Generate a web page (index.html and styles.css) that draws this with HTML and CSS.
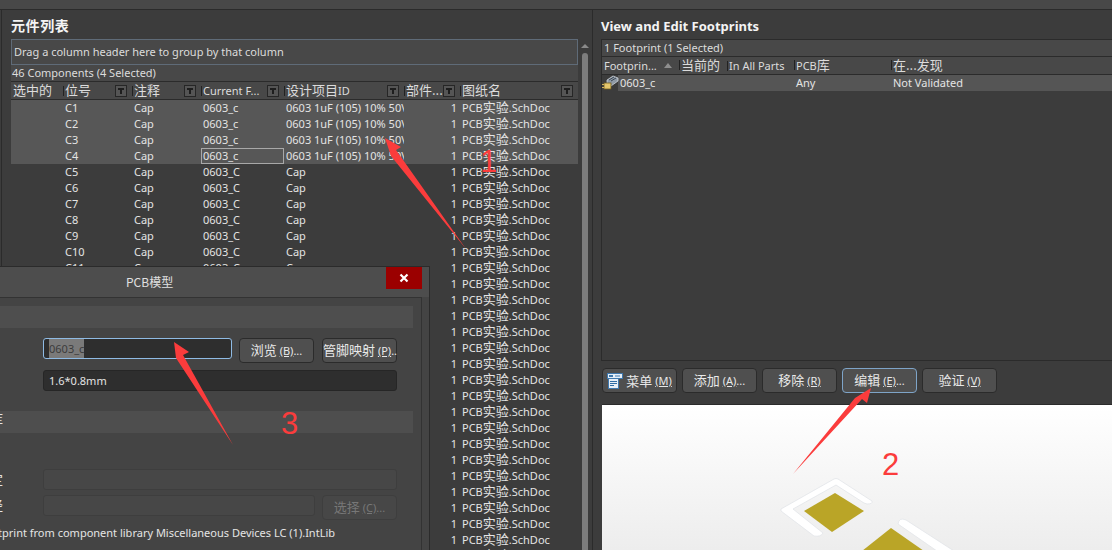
FILE: index.html
```html
<!DOCTYPE html>
<html lang="zh-CN">
<head>
    <meta charset="UTF-8">
    <title>PCB模型</title>
    <link rel="stylesheet" href="styles.css">
</head>
<body>
    <div class="top-strip"></div>

    <div class="workspace">
        <div class="left-panel">
            <h2 class="panel-title title-zh">元件列表</h2>
            <div class="panel-body">
                <div class="grid-area">
                    <div class="group-box">Drag a column header here to group by that column</div>
                    <div class="count-row">46 Components (4 Selected)</div>
                    <table class="comp-table">
                        <colgroup>
                            <col class="c-sel"><col class="c-ref"><col class="c-com"><col class="c-foot"><col class="c-id"><col class="c-part"><col class="c-sheet">
                        </colgroup>
                        <thead>
                            <tr>
                                <th class="cjk">选中的</th>
                                <th class="cjk">位号<i class="filter"></i></th>
                                <th class="cjk">注释<i class="filter"></i></th>
                                <th>Current F...<i class="filter"></i></th>
                                <th class="cjk">设计项目<span class="latin">ID</span><i class="filter"></i></th>
                                <th class="cjk">部件...<i class="filter"></i></th>
                                <th class="cjk">图纸名<i class="filter"></i></th>
                            </tr>
                        </thead>
                        <tbody>
                            <tr class="sel"><td></td><td>C1</td><td>Cap</td><td>0603_c</td><td>0603 1uF (105) 10% 50V</td><td class="num">1</td><td>PCB<span class="cjk">实验</span>.SchDoc</td></tr>
                            <tr class="sel"><td></td><td>C2</td><td>Cap</td><td>0603_c</td><td>0603 1uF (105) 10% 50V</td><td class="num">1</td><td>PCB<span class="cjk">实验</span>.SchDoc</td></tr>
                            <tr class="sel"><td></td><td>C3</td><td>Cap</td><td>0603_c</td><td>0603 1uF (105) 10% 50V</td><td class="num">1</td><td>PCB<span class="cjk">实验</span>.SchDoc</td></tr>
                            <tr class="sel"><td></td><td>C4</td><td>Cap</td><td class="focus">0603_c</td><td>0603 1uF (105) 10% 50V</td><td class="num">1</td><td>PCB<span class="cjk">实验</span>.SchDoc</td></tr>
                            <tr><td></td><td>C5</td><td>Cap</td><td>0603_C</td><td>Cap</td><td class="num">1</td><td>PCB<span class="cjk">实验</span>.SchDoc</td></tr>
                            <tr><td></td><td>C6</td><td>Cap</td><td>0603_C</td><td>Cap</td><td class="num">1</td><td>PCB<span class="cjk">实验</span>.SchDoc</td></tr>
                            <tr><td></td><td>C7</td><td>Cap</td><td>0603_C</td><td>Cap</td><td class="num">1</td><td>PCB<span class="cjk">实验</span>.SchDoc</td></tr>
                            <tr><td></td><td>C8</td><td>Cap</td><td>0603_C</td><td>Cap</td><td class="num">1</td><td>PCB<span class="cjk">实验</span>.SchDoc</td></tr>
                            <tr><td></td><td>C9</td><td>Cap</td><td>0603_C</td><td>Cap</td><td class="num">1</td><td>PCB<span class="cjk">实验</span>.SchDoc</td></tr>
                            <tr><td></td><td>C10</td><td>Cap</td><td>0603_C</td><td>Cap</td><td class="num">1</td><td>PCB<span class="cjk">实验</span>.SchDoc</td></tr>
                            <tr><td></td><td>C11</td><td>Cap</td><td>0603_C</td><td>Cap</td><td class="num">1</td><td>PCB<span class="cjk">实验</span>.SchDoc</td></tr>
                            <tr><td></td><td>C12</td><td>Cap</td><td>0603_C</td><td>Cap</td><td class="num">1</td><td>PCB<span class="cjk">实验</span>.SchDoc</td></tr>
                            <tr><td></td><td>C13</td><td>Cap</td><td>0603_C</td><td>Cap</td><td class="num">1</td><td>PCB<span class="cjk">实验</span>.SchDoc</td></tr>
                            <tr><td></td><td>C14</td><td>Cap</td><td>0603_C</td><td>Cap</td><td class="num">1</td><td>PCB<span class="cjk">实验</span>.SchDoc</td></tr>
                            <tr><td></td><td>C15</td><td>Cap</td><td>0603_C</td><td>Cap</td><td class="num">1</td><td>PCB<span class="cjk">实验</span>.SchDoc</td></tr>
                            <tr><td></td><td>C16</td><td>Cap</td><td>0603_C</td><td>Cap</td><td class="num">1</td><td>PCB<span class="cjk">实验</span>.SchDoc</td></tr>
                            <tr><td></td><td>C17</td><td>Cap</td><td>0603_C</td><td>Cap</td><td class="num">1</td><td>PCB<span class="cjk">实验</span>.SchDoc</td></tr>
                            <tr><td></td><td>C18</td><td>Cap</td><td>0603_C</td><td>Cap</td><td class="num">1</td><td>PCB<span class="cjk">实验</span>.SchDoc</td></tr>
                            <tr><td></td><td>C19</td><td>Cap</td><td>0603_C</td><td>Cap</td><td class="num">1</td><td>PCB<span class="cjk">实验</span>.SchDoc</td></tr>
                            <tr><td></td><td>C20</td><td>Cap</td><td>0603_C</td><td>Cap</td><td class="num">1</td><td>PCB<span class="cjk">实验</span>.SchDoc</td></tr>
                            <tr><td></td><td>C21</td><td>Cap</td><td>0603_C</td><td>Cap</td><td class="num">1</td><td>PCB<span class="cjk">实验</span>.SchDoc</td></tr>
                            <tr><td></td><td>C22</td><td>Cap</td><td>0603_C</td><td>Cap</td><td class="num">1</td><td>PCB<span class="cjk">实验</span>.SchDoc</td></tr>
                            <tr><td></td><td>C23</td><td>Cap</td><td>0603_C</td><td>Cap</td><td class="num">1</td><td>PCB<span class="cjk">实验</span>.SchDoc</td></tr>
                            <tr><td></td><td>C24</td><td>Cap</td><td>0603_C</td><td>Cap</td><td class="num">1</td><td>PCB<span class="cjk">实验</span>.SchDoc</td></tr>
                            <tr><td></td><td>C25</td><td>Cap</td><td>0603_C</td><td>Cap</td><td class="num">1</td><td>PCB<span class="cjk">实验</span>.SchDoc</td></tr>
                            <tr><td></td><td>C26</td><td>Cap</td><td>0603_C</td><td>Cap</td><td class="num">1</td><td>PCB<span class="cjk">实验</span>.SchDoc</td></tr>
                            <tr><td></td><td>C27</td><td>Cap</td><td>0603_C</td><td>Cap</td><td class="num">1</td><td>PCB<span class="cjk">实验</span>.SchDoc</td></tr>
                            <tr><td></td><td>C28</td><td>Cap</td><td>0603_C</td><td>Cap</td><td class="num">1</td><td>PCB<span class="cjk">实验</span>.SchDoc</td></tr>
                            <tr><td></td><td>C29</td><td>Cap</td><td>0603_C</td><td>Cap</td><td class="num">1</td><td>PCB<span class="cjk">实验</span>.SchDoc</td></tr>
                        </tbody>
                    </table>
                </div>
                <div class="scrollbar">
                    <span class="scroll-up"></span>
                    <span class="scroll-thumb"></span>
                </div>
            </div>
        </div>

        <div class="right-panel">
            <h2 class="panel-title">View and Edit Footprints</h2>
            <div class="fp-grid">
                <div class="fp-count">1 Footprint (1 Selected)</div>
                <div class="fp-head">
                    <span class="fp-c1">Footprin...<i class="sort-up"></i></span>
                    <span class="fp-c2 cjk">当前的</span>
                    <span class="fp-c3">In All Parts</span>
                    <span class="fp-c4">PCB<b class="cjk">库</b></span>
                    <span class="fp-c5 cjk">在...发现</span>
                </div>
                <div class="fp-row">
                    <span class="fp-icon">
                        <svg width="17" height="16" viewBox="0 0 17 16">
                            <path d="M5 5 L11 1 L16 3 L16 6 L9 11 L5 9 Z" fill="#8f9aa6" stroke="#d8dee4" stroke-width="0.7"/>
                            <path d="M7 5 L12 2 M9 6 L14 3" stroke="#3b4652" stroke-width="1"/>
                            <rect x="2" y="8" width="7" height="6" fill="#e4c66c" stroke="#6e5a20" stroke-width="0.8"/>
                            <rect x="0" y="9" width="2" height="1" fill="#d3b35a"/>
                            <rect x="0" y="12" width="2" height="1" fill="#d3b35a"/>
                        </svg>
                    </span>
                    <span class="fp-name">0603_c</span>
                    <span class="fp-c2"></span>
                    <span class="fp-c3"></span>
                    <span class="fp-c4">Any</span>
                    <span class="fp-c5">Not Validated</span>
                </div>
            </div>
            <div class="btn-row">
                <button class="btn btn-menu">
                    <svg width="16" height="16" viewBox="0 0 16 16">
                        <rect x="0.5" y="0.5" width="15" height="5" fill="#e6eff8" stroke="#3f78ad"/>
                        <rect x="2" y="2" width="4" height="2" fill="#3f78ad"/>
                        <rect x="8" y="2.5" width="5" height="1" fill="#3f78ad"/>
                        <rect x="1.5" y="5.5" width="10" height="10" fill="#e6eff8" stroke="#3f78ad"/>
                        <path d="M3 8.5h7M3 10.5h7M3 12.5h4" stroke="#2f6da6"/>
                    </svg>
                    <span class="cjk">菜单</span> <u>(M)</u>
                </button>
                <button class="btn"><span class="cjk">添加</span> <u>(A)</u>...</button>
                <button class="btn"><span class="cjk">移除</span> <u>(R)</u></button>
                <button class="btn btn-active"><span class="cjk">编辑</span> <u>(E)</u>...</button>
                <button class="btn"><span class="cjk">验证</span> <u>(V)</u></button>
            </div>
            <div class="preview">
                <svg class="preview-art" width="510" height="146" viewBox="0 0 510 146">
                    <path d="M179 104 L232 74 Q234 73 236 74 L270 96 Q271 99 265 99 L262 98 L234 80 L191 104 L221 128 Q219 132 212 131 L179 106 Z" fill="#fff" stroke="#dfe2e6" stroke-width="0.7"/>
                    <polygon points="233,88 262,106 230,127 202,106" fill="#baa527"/>
                    <path d="M296 119 Q297 112 304 115 L352 146 L335 146 Z" fill="#fff" stroke="#dfe2e6" stroke-width="0.7"/>
                    <polygon points="289,123 322,146 260,146" fill="#baa527"/>
                </svg>
            </div>
        </div>
    </div>

    <div class="dialog">
        <div class="dialog-title cjk">PCB模型</div>
        <button class="dialog-close">
            <svg width="10" height="10" viewBox="0 0 10 10"><path d="M1.5 1.5 L8.5 8.5 M8.5 1.5 L1.5 8.5" stroke="#fff" stroke-width="2.2"/></svg>
        </button>
        <div class="dialog-body">
            <div class="section-bar"></div>
            <div class="form-row form-row-first">
                <div class="input input-focus"><span class="input-sel">0603_c</span></div>
                <button class="btn dlg-btn"><span class="cjk">浏览</span> <u>(B)</u>...</button>
                <button class="btn dlg-btn"><span class="cjk">管脚映射</span> <u>(P)</u>..</button>
            </div>
            <div class="form-row form-row-desc">
                <div class="input">1.6*0.8mm</div>
            </div>
            <div class="section-bar section-bar-second"><span class="clipped cjk">库</span></div>
            <div class="form-row form-row-lib">
                <span class="clipped clipped-label cjk">定</span>
                <div class="input input-blank"></div>
            </div>
            <div class="form-row form-row-path">
                <span class="clipped clipped-label cjk">径</span>
                <div class="input input-blank"></div>
                <button class="btn dlg-btn dlg-btn-disabled"><span class="cjk">选择</span> <u>(C)</u>...</button>
            </div>
            <p class="found-text">Footprint from component library Miscellaneous Devices LC (1).IntLib</p>
        </div>
    </div>

    <!-- annotation layer, drawn over the screenshot -->
    <svg class="marks" width="1112" height="550" viewBox="0 0 1112 550">
        <polygon points="385,138 401,147 396,150 466,249 391,156" fill="#fb3c3c"/>
        <polygon points="174,342 189,352 183,355 233,445 176,358" fill="#fb3c3c"/>
        <polygon points="871,388 867,403 862,399 793,474 855,398" fill="#fb3c3c"/>
        <text class="mark-num" x="480" y="172">1</text>
        <text class="mark-num" x="281" y="434">3</text>
        <text class="mark-num" x="882" y="475">2</text>
    </svg>
</body>
</html>
```

FILE: styles.css
```css
* {
    box-sizing: border-box;
}

html, body {
    margin: 0;
    height: 550px;
    overflow: hidden;
}

body {
    position: relative;
    background-color: #3c3c3c;
    color: #e4e4e4;
    font-family: "Noto Sans", "Noto Sans CJK SC", sans-serif;
    font-size: 11px;
    line-height: 16px;
}

.cjk {
    font-family: "Noto Sans CJK SC", sans-serif;
    font-size: 13px;
    font-weight: 400;
}

.top-strip {
    height: 10px;
    background-color: #484848;
    border-bottom: 1px solid #2b2b2b;
}

.workspace {
    display: flex;
    height: 540px;
}

.panel-title {
    margin: 0;
    height: 29px;
    padding-top: 8px;
    font-size: 13px;
    line-height: 16px;
    font-weight: 700;
    color: #f4f4f4;
}

.title-zh {
    font-size: 14px;
    letter-spacing: 0.6px;
}

/* left panel */
.left-panel {
    width: 592px;
    margin-left: 1px;
    padding-left: 9px;
    border-left: 1px solid #2b2b2b;
    border-right: 1px solid #2b2b2b;
}

.panel-body {
    display: flex;
}

.grid-area {
    width: 567px;
    flex: none;
}

.group-box {
    height: 26px;
    padding: 4px 2px;
    background-color: #484848;
    border: 1px solid #5f6b78;
    color: #dcdcdc;
}

.count-row {
    height: 17px;
    padding: 0 1px;
    background-color: #484848;
    color: #dcdcdc;
    border-bottom: 1px solid #2b2b2b;
}

.comp-table {
    width: 567px;
    table-layout: fixed;
    border-collapse: collapse;
}

.c-sel { width: 52px; }
.c-ref { width: 69px; }
.c-com { width: 69px; }
.c-foot { width: 83px; }
.c-id { width: 120px; }
.c-part { width: 56px; }
.c-sheet { width: 118px; }

.comp-table th {
    position: relative;
    height: 17px;
    padding: 1px 0 0 2px;
    background-color: #484848;
    border-bottom: 1px solid #2b2b2b;
    text-align: left;
    vertical-align: top;
    font-weight: 400;
    font-size: 11px;
    line-height: 16px;
    color: #dcdcdc;
    white-space: nowrap;
    overflow: hidden;
}

.comp-table th.cjk {
    padding-top: 0;
    font-size: 13px;
}

.comp-table th .latin {
    font-family: "Noto Sans", sans-serif;
    font-size: 11px;
}

.comp-table th + th::before {
    content: "";
    position: absolute;
    left: 0;
    top: 4px;
    width: 1px;
    height: 10px;
    background-color: #222;
}

.filter {
    position: absolute;
    right: 5px;
    top: 3px;
    width: 12px;
    height: 12px;
    background-color: #555;
    border: 1px solid #262626;
}

/* funnel glyph: a bar and a stem */
.filter::after {
    content: "";
    position: absolute;
    left: 2px;
    top: 2px;
    width: 6px;
    height: 6px;
    background:
        linear-gradient(#1e1e1e, #1e1e1e) center top / 6px 2px no-repeat,
        linear-gradient(#1e1e1e, #1e1e1e) center / 2px 6px no-repeat;
}

.comp-table td {
    height: 16px;
    padding: 0 0 0 2px;
    white-space: nowrap;
    overflow: hidden;
    color: #e4e4e4;
}

.comp-table td .cjk {
    line-height: 14px;
}

.comp-table tr.sel td {
    background-color: #575757;
}

.comp-table td.num {
    text-align: right;
    padding-right: 3px;
}

.comp-table td.focus {
    outline: 1px solid #a8a8a8;
    outline-offset: -1px;
}

.scrollbar {
    position: relative;
    width: 14px;
    margin-left: 1px;
    height: 511px;
}

.scroll-up {
    position: absolute;
    left: 2px;
    top: 5px;
    border-left: 4px solid transparent;
    border-right: 4px solid transparent;
    border-bottom: 4px solid #8a8a8a;
}

.scroll-thumb {
    position: absolute;
    left: 3px;
    top: 14px;
    bottom: 0;
    width: 6px;
    background-color: #7d7d7d;
    border-radius: 3px 3px 0 0;
}

/* right panel */
.right-panel {
    flex: 1;
    padding-left: 8px;
    min-width: 0;
}

.fp-grid {
    height: 322px;
    border: 1px solid #2b2b2b;
    border-right: 0;
    background-color: #3c3c3c;
}

.fp-count {
    height: 17px;
    padding: 0 2px;
    background-color: #484848;
    color: #dcdcdc;
    border-bottom: 1px solid #2b2b2b;
}

.fp-head, .fp-row {
    display: flex;
    align-items: center;
    height: 18px;
}

.fp-head {
    background-color: #484848;
    border-bottom: 1px solid #2b2b2b;
    color: #dcdcdc;
}

.fp-head span {
    position: relative;
    padding-left: 2px;
    white-space: nowrap;
}

.fp-head span.cjk {
    padding-bottom: 2px;
}

.fp-head span + span::before {
    content: "";
    position: absolute;
    left: 0;
    top: 3px;
    width: 1px;
    height: 10px;
    background-color: #222;
}

.fp-c1 { width: 77px; }
.fp-c2 { width: 48px; }
.fp-c3 { width: 67px; }
.fp-c4 { width: 97px; }
.fp-c5 { width: 150px; }

.sort-up {
    display: inline-block;
    margin-left: 7px;
    vertical-align: 2px;
    border-left: 4px solid transparent;
    border-right: 4px solid transparent;
    border-bottom: 5px solid #8e8e8e;
}

.fp-row {
    height: 16px;
    background-color: #555;
}

.fp-row > span {
    padding-left: 2px;
}

.fp-icon {
    flex: none;
    width: 16px;
    height: 16px;
    padding: 0 !important;
    background-color: #3c3c3c;
}

.fp-name {
    width: 61px;
    padding-left: 1px;
}

.btn-row {
    display: flex;
    gap: 5px;
    height: 43px;
    padding-top: 7px;
    padding-left: 1px;
}

.btn {
    height: 25px;
    width: 75px;
    padding: 0;
    background-color: #4f4f4f;
    border: 1px solid #2b2b2b;
    border-radius: 4px;
    color: #e8e8e8;
    font-family: inherit;
    font-size: 11px;
    line-height: 20px;
    white-space: nowrap;
}

.btn u {
    font-size: 11px;
}

.btn-menu {
    display: flex;
    align-items: center;
    justify-content: center;
    gap: 3px;
}

.btn-active {
    border-color: #7ea4c8;
}

.preview {
    height: 146px;
    margin-left: 1px;
    background: linear-gradient(#ffffff, #ededed);
    border-top: 1px solid #2b2b2b;
    overflow: hidden;
}

.preview-art {
    display: block;
}

/* dialog over the grid */
.dialog {
    position: absolute;
    left: 0;
    top: 266px;
    width: 430px;
    height: 284px;
    background-color: #444;
    border-top: 1px solid #2b2b2b;
    border-right: 1px solid #2b2b2b;
}

.dialog-title {
    height: 30px;
    padding: 7px 0 0 126px;
    font-size: 12px;
    background-color: #4d4d4d;
    color: #e0e0e0;
}

.dialog-close {
    position: absolute;
    left: 386px;
    top: 0;
    width: 36px;
    height: 22px;
    padding: 0;
    background-color: #9b0000;
    border: 0;
}

.dialog-body {
    height: 253px;
    width: 422px;
    border-top: 1px solid #333;
    border-right: 1px solid #333;
    padding-top: 8px;
}

.section-bar {
    position: relative;
    width: 413px;
    height: 22px;
    background-color: #4e4e4e;
}

.section-bar-second {
    margin-top: 20px;
}

.clipped {
    position: absolute;
    left: -10px;
    font-size: 13px;
}

.clipped-label {
    top: 2px;
}

.form-row {
    position: relative;
    display: flex;
    align-items: flex-start;
    gap: 7px;
    padding-left: 43px;
    width: 397px;
}

.form-row-first {
    margin-top: 10px;
    height: 25px;
}

.form-row-first .dlg-btn + .dlg-btn {
    margin-left: 1px;
}

.form-row-desc {
    margin-top: 7px;
    height: 21px;
}

.form-row-lib {
    margin-top: 36px;
    height: 21px;
}

.form-row-path {
    margin-top: 5px;
    height: 24px;
}

.input {
    flex: 1;
    height: 21px;
    padding: 0 5px;
    line-height: 19px;
    background-color: #2e2e2e;
    border: 1px solid #262626;
    border-radius: 3px;
    color: #e4e4e4;
}

.input-focus {
    flex: none;
    width: 189px;
    border-color: #8fbbe4;
}

.input-sel {
    display: inline-block;
    background-color: #7a7a7a;
    color: #3c3c3c;
}

.input-blank {
    background-color: #474747;
    border-color: #3e3e3e;
}

.dlg-btn {
    flex: none;
    width: 75px;
}

.dlg-btn-disabled {
    background-color: #474747;
    border-color: #3e3e3e;
    color: #777;
}

.found-text {
    margin: 6px 0 0 -21px;
    white-space: nowrap;
}

/* red annotations */
.marks {
    position: absolute;
    left: 0;
    top: 0;
}

.mark-num {
    fill: #fb3c3c;
    font-family: "Liberation Sans", sans-serif;
    font-size: 31px;
}
```
